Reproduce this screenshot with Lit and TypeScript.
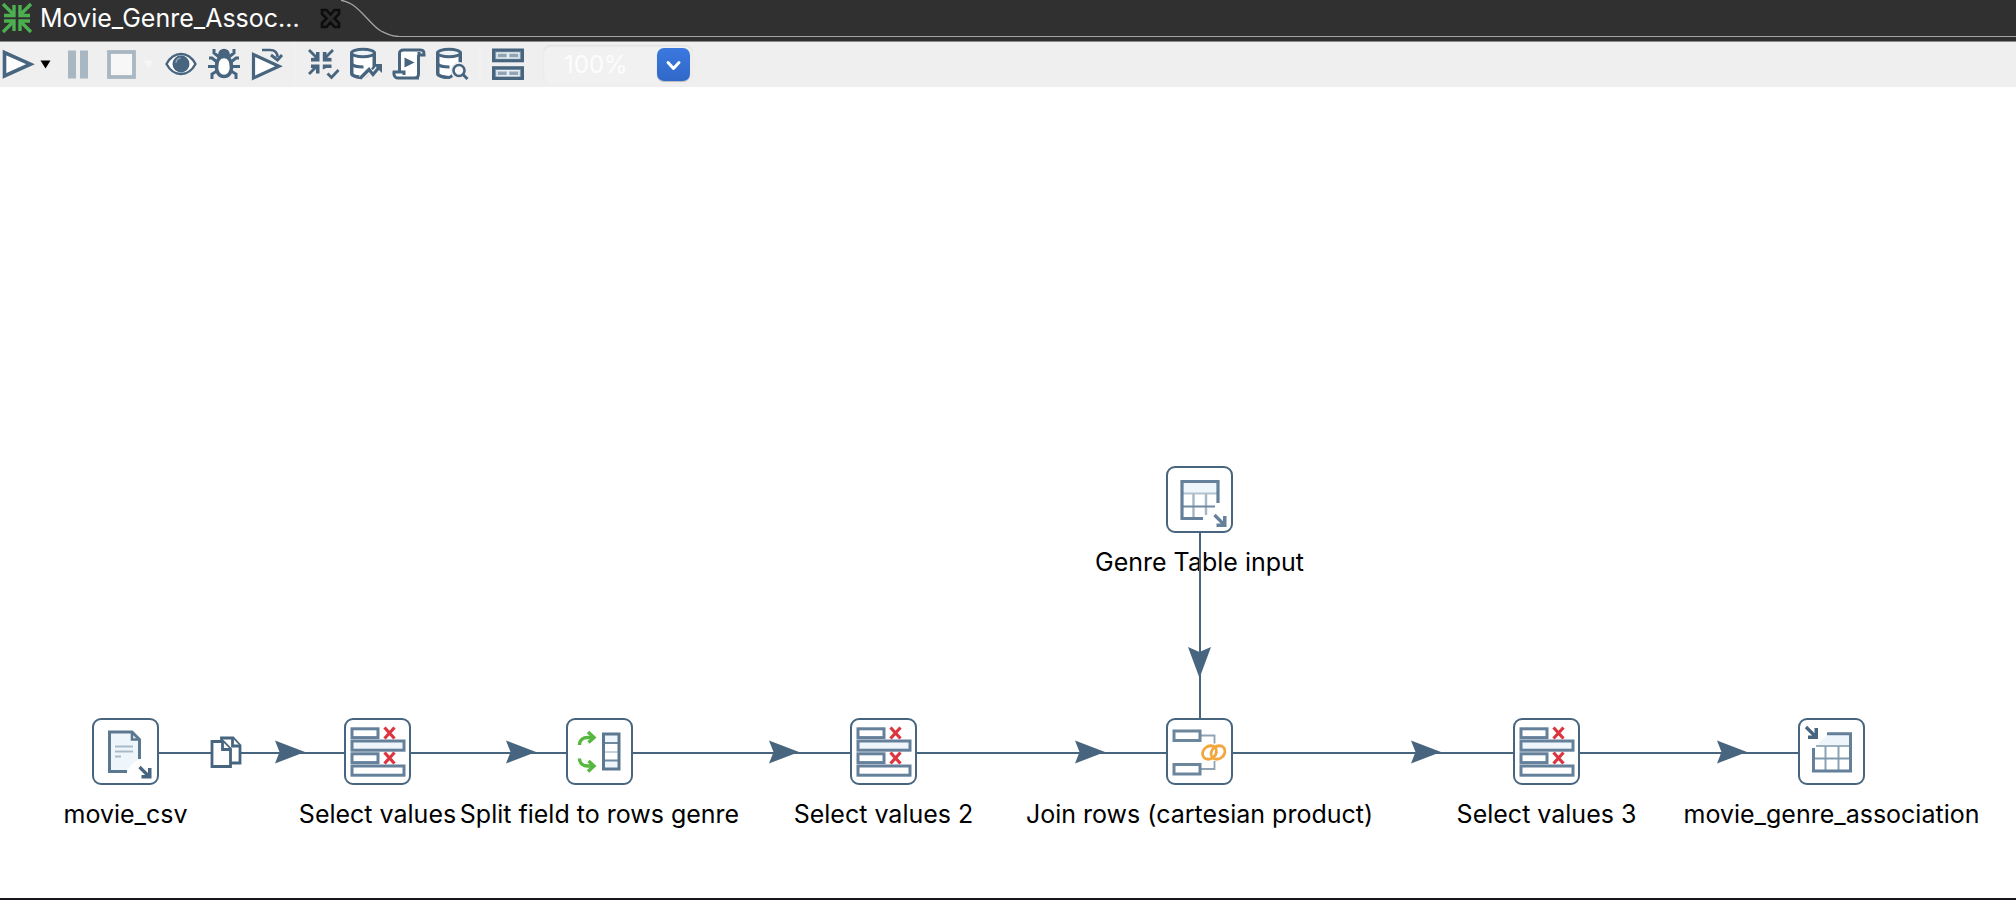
import { LitElement, html, svg, css, nothing, SVGTemplateResult } from "lit";
import { customElement, property } from "lit/decorators.js";

type StepKind = "file" | "select" | "split" | "join" | "tableInput" | "tableOutput";

interface Step {
  id: string;
  kind: StepKind;
  label: string;
  x: number;
  y: number;
}

interface Hop {
  from: string;
  to: string;
  arrow: number;
  copies?: number;
}

const BOX = 67;
const INK = "#47657f";

const steps: Step[] = [
  { id: "csv", kind: "file", label: "movie_csv", x: 92, y: 631 },
  { id: "sel1", kind: "select", label: "Select values", x: 344, y: 631 },
  { id: "split", kind: "split", label: "Split field to rows genre", x: 566, y: 631 },
  { id: "sel2", kind: "select", label: "Select values 2", x: 850, y: 631 },
  { id: "join", kind: "join", label: "Join rows (cartesian product)", x: 1166, y: 631 },
  { id: "genre", kind: "tableInput", label: "Genre Table input", x: 1166, y: 379 },
  { id: "sel3", kind: "select", label: "Select values 3", x: 1513, y: 631 },
  { id: "out", kind: "tableOutput", label: "movie_genre_association", x: 1798, y: 631 },
];

const hops: Hop[] = [
  { from: "csv", to: "sel1", arrow: 305, copies: 210 },
  { from: "sel1", to: "split", arrow: 536 },
  { from: "split", to: "sel2", arrow: 799 },
  { from: "sel2", to: "join", arrow: 1105 },
  { from: "join", to: "sel3", arrow: 1441 },
  { from: "sel3", to: "out", arrow: 1747 },
  { from: "genre", to: "join", arrow: 591 },
];

const cross = (y: number) => svg`
  <path d="M40.500 ${y}l10 11M50.500 ${y}l-10 11" stroke="#dc3540" stroke-width="3.200" />`;

const stepArt: Record<StepKind, SVGTemplateResult> = {
  file: svg`
    <path d="M35 53.500H17.500V14H40v7h7.500v20L40 46z" fill="#eff6fb" />
    <path d="M35 53.500H17.500V14H40L47.500 21.500V41" stroke="#5c7890" stroke-width="3" />
    <path d="M40 14v7.500h7.500" stroke="#5c7890" stroke-width="2.600" />
    <path d="M23 28.500h18M23 33.500h18M23 38.500h6" stroke="#a9bac9" stroke-width="2" />
    <path d="M47.500 49l10 10" stroke=${INK} stroke-width="3.200" />
    <path d="M59.500 50v10.500H49.500v-3.500h4l2.500-2.500V50z" fill=${INK} />`,
  select: svg`
    <g stroke="#64809a" stroke-width="3">
      <rect x="8" y="10.800" width="26" height="8.800" />
      <rect x="8" y="23" width="52" height="9.200" fill="#eff6fb" />
      <rect x="8" y="35.800" width="26" height="8.800" />
      <rect x="8" y="48" width="52" height="9.200" />
    </g>
    ${cross(9.5)}${cross(34.5)}`,
  split: svg`
    <rect x="37.500" y="16" width="15.500" height="35" fill="#eff6fb" />
    <rect x="38" y="25" width="15" height="17" fill="#fff" />
    <path d="M38 25h15M38 42.500h15" stroke="#6f8aa0" stroke-width="2" />
    <path d="M38 34h15" stroke="#b9c8d4" stroke-width="1.600" />
    <rect x="37.500" y="16" width="15.500" height="35" stroke="#5c7890" stroke-width="3" />
    <g stroke="#56b83e" stroke-width="3.400">
      <path d="M13.500 27c0-5 4-7.500 8-7.500h6" />
      <path d="M22 14l6 5.500-5.500 5" />
      <path d="M13.500 40.500c0 5 4 7.500 8 7.500h6" />
      <path d="M22.500 43l5.500 5-6 5.500" />
    </g>`,
  join: svg`
    <path d="M35 17.500h13.500v8M35 51h13.500v-8" stroke="#8fa3b5" stroke-width="1.800" />
    <rect x="8" y="13" width="26" height="9.500" stroke="#6c869c" stroke-width="3" />
    <rect x="8" y="46.500" width="26" height="9.500" stroke="#6c869c" stroke-width="3" />
    <g stroke="#f3a63b" stroke-width="2.800">
      <ellipse cx="43.500" cy="34.500" rx="7.500" ry="6.200" transform="rotate(-40 43.500 34.500)" />
      <ellipse cx="52" cy="34.500" rx="7.500" ry="6.200" transform="rotate(-40 52 34.500)" />
    </g>`,
  tableInput: svg`
    <rect x="16" y="17" width="36" height="10" fill="#eff6fb" />
    <path d="M16 27.500h36" stroke="#b3c3d0" stroke-width="2" />
    <path d="M27.500 28v24M40 28v21" stroke="#a5b7c6" stroke-width="2.400" />
    <path d="M16 40.500h33" stroke="#6f8aa0" stroke-width="2" />
    <path d="M37 52.500H16V15.500H52V37" stroke="#64809a" stroke-width="3.200" />
    <path d="M48.500 49l10 10" stroke="#64809a" stroke-width="3.200" />
    <path d="M60.500 50v11H50.500v-3.500h4l2.500-2.500V50z" fill="#64809a" />`,
  tableOutput: svg`
    <path d="M18 28L30 16h22v12z" fill="#eff6fb" />
    <path d="M18 28h34" stroke="#9db0c0" stroke-width="2" />
    <path d="M27.500 28v24M40.500 28v24" stroke="#8ba1b4" stroke-width="2" />
    <path d="M16 40.500h36" stroke="#8199ad" stroke-width="2" />
    <path d="M29 15.800H52.500V53H15.500V30" stroke="#64809a" stroke-width="3" />
    <path d="M8 9l10 10" stroke=${INK} stroke-width="3.200" />
    <path d="M20 10v11H10v-3.500h4l2.500-2.500V10z" fill=${INK} />`,
};

const database = svg`
  <path d="M2 5v20.500c0 2 5 4 11 4l2-1 9-9V5z" fill="#fff" />
  <ellipse cx="13" cy="5" rx="11.500" ry="3.800" fill="#eef3f7" />
  <path d="M1.500 5v20.500c0 2 4 3.500 9 4M24.500 5v11M1.500 16c2 2.500 6 3 12 3" />`;

const icons: Record<string, SVGTemplateResult> = {
  run: svg`<path d="M2.500 4.500v23.500L28.500 16.200z" fill="#fff" stroke-width="3.600" />`,
  pause: svg`<path d="M6 2.500h8v28H6zM18 2.500h8v28h-8z" fill="#a9b7c2" stroke="none" />`,
  stop: svg`<rect x="4" y="4" width="25" height="25" fill="#f7f7f7" stroke="#a9b7c2" stroke-width="3.800" />`,
  preview: svg`
    <path d="M1.500 16C5 9.500 10 6 16 6s11 3.500 14.500 10C27 22.500 22 26 16 26S5 22.500 1.500 16z" fill="#fff" stroke-width="2.400" />
    <circle cx="16" cy="16" r="8.500" fill=${INK} stroke="none" />
    <path d="M11 15c.3-3 2-4.800 4.500-5" stroke="#8da2b4" stroke-width="1.400" />`,
  debug: svg`
    <path d="M6 1v4l5 4M26 1v4l-5 4M1 10h3l5 4M31 10h-3l-5 4M0 18.500h8M32 18.500h-8M4 31v-5l5-3M28 31v-5l-5-3" stroke-width="3" />
    <path d="M11 7c0-7 10-7 10 0z" fill=${INK} stroke-width="2" />
    <path d="M16 8.500c5.500 0 7.500 5.500 7.500 11 0 5-3 9-7.500 9s-7.500-4-7.500-9c0-5.500 2-11 7.500-11z" fill="#fff" stroke-width="3.600" />`,
  replay: svg`
    <path d="M2.500 6.500V30L28 18.200z" fill="#fff" stroke-width="3.200" />
    <path d="M11 2h8c5 0 7.500 3 7.500 7" stroke-width="2.600" />
    <path d="M20 7l6.500 5L31 7" stroke-width="3" />`,
  verify: svg`
    <path d="M2 2l8 8M26 2l-8 8M2 26l8-8" stroke-width="2.800" />
    <path d="M12.500 4v9.500H4V10l5-.5V4zM15.800 4v9.500h8.700V10l-5-.5V4zM12.500 25.500v-9H4V20l5 .5v5zM15.800 21.500v-5h8.700V20h-5z" fill=${INK} stroke="none" />
    <path d="M20.500 25.500l4 4 7-7.500" stroke-width="2.800" />`,
  impact: svg`${database}
    <path d="M11 30.500l8-8 4 4 7-8" stroke="#efefef" stroke-width="6" />
    <path d="M10 30.500l9-9 4 5 6-7" stroke-width="3.200" />
    <path d="M23 16h9v9z" fill=${INK} stroke="none" />`,
  sql: svg`
    <path d="M6 3h21v24l-3 3H3l-2-5h5z" fill="#fff" stroke="none" />
    <path d="M26 30H5c-5 0-4-6-4-6h10v3M6.500 23V6c0-3 1-4 4-4h17c3 0 3.500 1 3.500 5h-5V4M25.500 7v19c0 2.500-1 4-4 4" />
    <path d="M11.500 9.500v10l10-5z" fill=${INK} stroke="none" />`,
  explore: svg`${database}
    <circle cx="23" cy="22.500" r="6" fill="#f7f7f7" stroke="#efefef" stroke-width="5" />
    <circle cx="23" cy="22.500" r="5.500" fill="#f7f7f7" stroke-width="2.600" />
    <path d="M27 26.500l4.500 4.500" stroke-width="3" />`,
  results: svg`
    <rect x="1.500" y="2" width="29" height="10.800" fill="#7d95a9" />
    <rect x="1.500" y="19.700" width="29" height="10.800" fill="#7d95a9" />
    <path d="M5 5h10.500v5H5zM16.500 5H27v5H16.500zM5 22.700h10.500v5H5zM16.500 22.700H27v5H16.500z" fill="#8fa4b6" stroke="#e9eef2" stroke-width="1.600" />`,
};

@customElement("tool-button")
class ToolButton extends LitElement {
  @property() icon = "run";
  @property() label = "";
  @property({ type: Boolean }) disabled = false;

  static styles = css`
    :host {
      display: block;
      line-height: 0;
    }
    .button {
      display: block;
      padding: 0;
      border: 0;
      background: none;
    }
    .glyph {
      display: block;
      width: 32px;
      height: 32px;
      overflow: visible;
    }
  `;

  render() {
    return html`<button class="button" type="button" aria-label=${this.label} ?disabled=${this.disabled}>
      <svg class="glyph" viewBox="0 0 32 32" fill="none" stroke=${INK} stroke-width="3" aria-hidden="true">
        ${icons[this.icon]}
      </svg>
    </button>`;
  }
}

@customElement("tab-strip")
class TabStrip extends LitElement {
  static styles = css`
    :host {
      display: flex;
      align-items: flex-start;
      box-sizing: border-box;
      height: 42px;
      background: #303030;
      border-bottom: 1px solid #8c8a8c;
      font-family: Inter, "Liberation Sans", sans-serif;
    }
    .tab {
      display: flex;
      align-items: center;
      gap: 7px;
      height: 36px;
      padding: 0 0 0 1px;
      border: 0;
      background: none;
      color: #fff;
      font: inherit;
      font-size: 25px;
      line-height: 36px;
      white-space: nowrap;
    }
    .mark {
      width: 32px;
      height: 32px;
    }
    .close {
      display: flex;
      padding: 8px 0 0;
      margin-left: 20px;
      border: 0;
      background: none;
    }
    .cross {
      width: 21px;
      height: 21px;
    }
    .curve {
      flex: none;
      width: 58px;
      height: 37px;
    }
    .rail {
      flex: 1;
      box-sizing: border-box;
      height: 37px;
      border-bottom: 1px solid #a3a3a3;
    }
  `;

  render() {
    return html`
      <button class="tab" type="button">
        <svg class="mark" viewBox="0 0 32 32" fill="none" stroke="#4caf50" stroke-width="3.400" aria-hidden="true">
          <path d="M2 2l10 10M30 2L20 12M2 30l10-10M30 30L20 20" />
          <path d="M13 3v10.500H3M19 3v10.500h10M13 29V19H3M19 29V19h10" />
        </svg>
        <span>Movie_Genre_Assoc...</span>
      </button>
      <button class="close" type="button" aria-label="Close tab">
        <svg class="cross" viewBox="0 0 21 21" fill="#2b2b2b" stroke="#0d0d0d" stroke-width="2.600" aria-hidden="true">
          <path d="M2 2h4.500l4 4.500 4-4.500H19v4l-4.500 4.500L19 15v4h-4.500l-4-4.500-4 4.500H2v-4l4.500-4.500L2 6z" />
        </svg>
      </button>
      <svg class="curve" viewBox="0 0 58 37" fill="none" stroke="#a3a3a3" stroke-width="1.300" aria-hidden="true">
        <path d="M-2 0C8 1 14 6 21 13S34 28 40 31S50 36.500 58 36.500" />
      </svg>
      <div class="rail"></div>
    `;
  }
}

@customElement("tool-bar")
class ToolBar extends LitElement {
  static styles = css`
    :host {
      display: flex;
      align-items: center;
      gap: 11px;
      box-sizing: border-box;
      height: 45px;
      padding: 0 0 1px 2px;
      background: #efefef;
      font-family: Inter, "Liberation Sans", sans-serif;
    }
    .split {
      display: flex;
      align-items: center;
      gap: 6px;
    }
    .caret {
      width: 11px;
      padding: 0;
      border: 0;
      background: none;
      line-height: 0;
    }
    .separator {
      width: 2px;
      height: 40px;
      background: #f1f1f1;
    }
    .zoom {
      position: relative;
      box-sizing: border-box;
      width: 150px;
      height: 39px;
      margin-left: 8px;
      border-radius: 8px;
      background: #f1f1f1;
      box-shadow: inset 0 1px 2px #dcdcdc;
    }
    .level {
      box-sizing: border-box;
      width: 100%;
      height: 100%;
      padding: 0 40px 0 21px;
      border: 0;
      background: none;
      appearance: none;
      color: #fdfdfd;
      font: inherit;
      font-size: 24px;
    }
    .chevron {
      position: absolute;
      top: 3px;
      right: 3px;
      width: 33px;
      height: 33px;
      border-radius: 7px;
      background: linear-gradient(#3b79df, #3068c8);
      box-shadow: 0 1px 1px #b9b9b9;
      pointer-events: none;
    }
  `;

  private caret(color: string) {
    return html`<svg width="11" height="9" viewBox="0 0 11 9" aria-hidden="true">
      <path d="M.5 .5h10L5.500 8.500z" fill=${color} />
    </svg>`;
  }

  render() {
    return html`
      <div class="split">
        <tool-button icon="run" label="Run"></tool-button>
        <button class="caret" type="button" aria-label="Run options">${this.caret("#000")}</button>
      </div>
      <tool-button icon="pause" label="Pause" disabled></tool-button>
      <div class="split">
        <tool-button icon="stop" label="Stop" disabled></tool-button>
        <button class="caret" type="button" aria-label="Stop options" disabled>${this.caret("#f6f6f6")}</button>
      </div>
      <tool-button icon="preview" label="Preview"></tool-button>
      <tool-button icon="debug" label="Debug"></tool-button>
      <tool-button icon="replay" label="Replay"></tool-button>
      <div class="separator"></div>
      <tool-button icon="verify" label="Verify"></tool-button>
      <tool-button icon="impact" label="Impact analysis"></tool-button>
      <tool-button icon="sql" label="Generate SQL"></tool-button>
      <tool-button icon="explore" label="Explore database"></tool-button>
      <div class="separator"></div>
      <tool-button icon="results" label="Show results"></tool-button>
      <div class="zoom">
        <select class="level" aria-label="Zoom level">
          <option>100%</option>
        </select>
        <svg class="chevron" viewBox="0 0 33 33" fill="none" stroke="#fff" stroke-width="3" stroke-linecap="round" stroke-linejoin="round" aria-hidden="true">
          <path d="M11 14.500l5.500 6 5.500-6" />
        </svg>
      </div>
    `;
  }
}

@customElement("flow-canvas")
class FlowCanvas extends LitElement {
  static styles = css`
    :host {
      display: block;
      position: relative;
      overflow: hidden;
      background: #fff;
      font-family: Inter, "Liberation Sans", sans-serif;
    }
    .step {
      position: absolute;
      display: flex;
      flex-direction: column;
      align-items: center;
      gap: 12px;
      width: 67px;
    }
    .box {
      flex: none;
      box-sizing: border-box;
      width: 67px;
      height: 67px;
      border: 2px solid #47657f;
      border-radius: 9px;
      background: #fff;
    }
    .art {
      display: block;
      width: 67px;
      height: 67px;
      margin: -2px;
    }
    .label {
      color: #000;
      font-size: 25px;
      line-height: 34px;
      white-space: nowrap;
    }
    .hops {
      position: absolute;
      inset: 0;
      width: 100%;
      height: 100%;
      pointer-events: none;
    }
  `;

  private hop(h: Hop) {
    const a = steps.find((s) => s.id === h.from)!;
    const b = steps.find((s) => s.id === h.to)!;
    if (a.x === b.x) {
      const x = a.x + BOX / 2 + 0.5;
      return svg`
        <path d="M${x} ${a.y + BOX}V${b.y}" stroke=${INK} stroke-width="2" />
        <path d="M${x - 0.5} ${h.arrow}l-11.500-31 11.500 5 11.500-5z" fill=${INK} />`;
    }
    const y = a.y + BOX / 2 + 1;
    return svg`
      <path d="M${a.x + BOX} ${y + 0.5}H${b.x}" stroke=${INK} stroke-width="2" />
      <path d="M${h.arrow} ${y - 0.5}l-30-11.500 4.500 11.500-4.500 11.500z" fill=${INK} />
      ${h.copies === undefined
        ? nothing
        : svg`<g transform="translate(${h.copies} ${y - 17})" fill="#fff" stroke=${INK} stroke-width="2.800">
            <path d="M11.500 2.500H23l7 7.500v17.500H11.500z" />
            <path d="M22.500 2.500V10.500H30" />
            <path d="M2 6h11l7.500 7.500V31H2z" />
            <path d="M12.500 6v8h8" />
          </g>`}`;
  }

  render() {
    return html`
      ${steps.map(
        (s) => html`<div class="step" style="left:${s.x}px;top:${s.y}px">
          <div class="box">
            <svg class="art" viewBox="0 0 67 67" fill="none" aria-hidden="true">${stepArt[s.kind]}</svg>
          </div>
          <span class="label">${s.label}</span>
        </div>`
      )}
      <svg class="hops" aria-hidden="true">${hops.map((h) => this.hop(h))}</svg>
    `;
  }
}

@customElement("app-root")
class AppRoot extends LitElement {
  static styles = css`
    :host {
      display: flex;
      flex-direction: column;
      box-sizing: border-box;
      height: 100vh;
      border-bottom: 2px solid #14161c;
    }
    .canvas {
      flex: 1;
    }
  `;

  render() {
    return html`
      <tab-strip></tab-strip>
      <tool-bar></tool-bar>
      <flow-canvas class="canvas"></flow-canvas>
    `;
  }
}
